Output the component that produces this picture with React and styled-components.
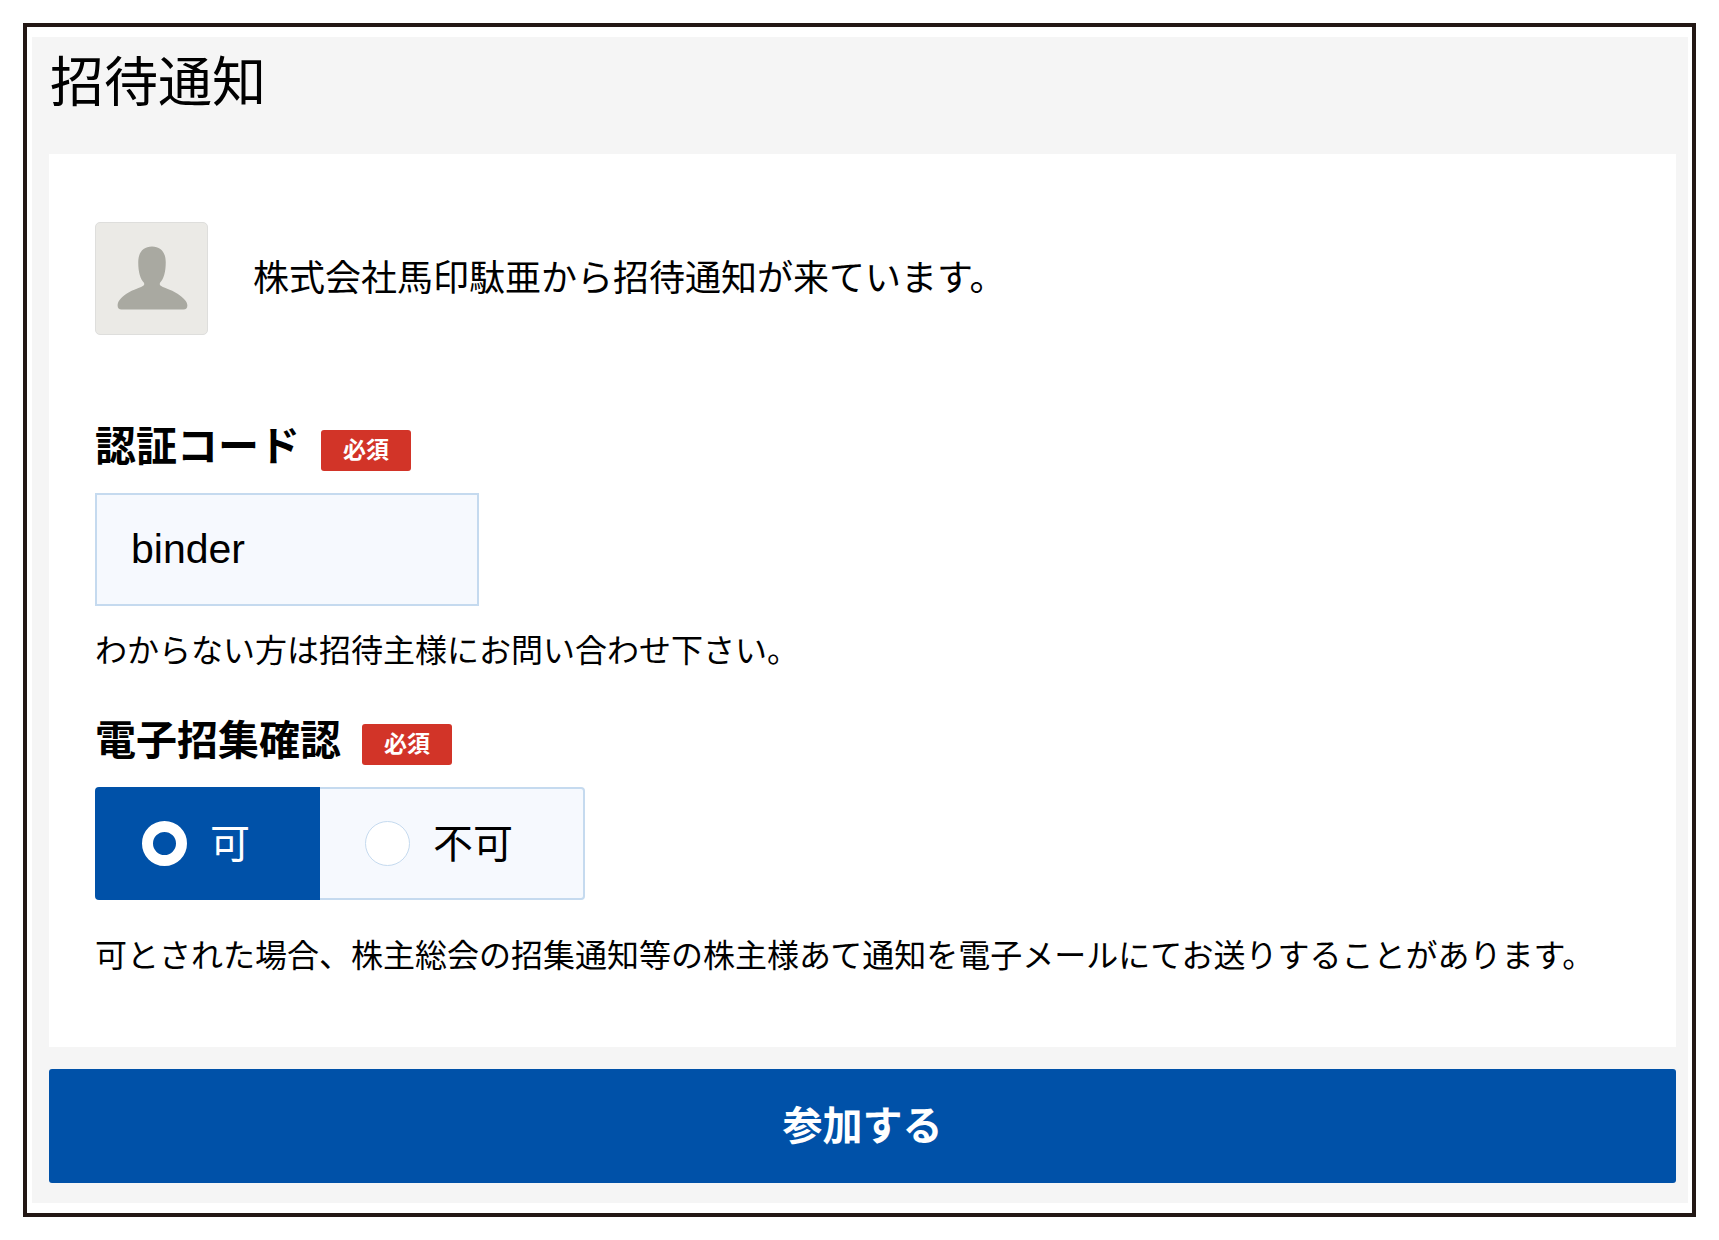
import React, { useState } from 'react';
import styled, { createGlobalStyle } from 'styled-components';

const GlobalStyle = createGlobalStyle`
    :root {
        --blue: #0051a8;
        --pale-blue: #f6f9fe;
        --line-blue: #c5daef;
        --red: #d23428;
        --gray: #f5f5f5;
    }
    * { box-sizing: border-box; }
    body {
        margin: 0;
        background: #fff;
        color: #000;
        font-family: "Liberation Sans", "Noto Sans CJK JP", sans-serif;
    }
`;
const Frame = styled.div`
    margin: 23px;
    padding: 10px 4px 10px 5px;
    border: 4px solid #231815;
`;
const Page = styled.main`
    padding: 0 12px 20px 17px;
    background: var(--gray);
`;
const Title = styled.h1`
    margin: 0;
    padding: 0 1px 25px;
    font-size: 54px;
    font-weight: 400;
    line-height: 92px;
`;
const Card = styled.section`
    padding: 68px 46px 67px;
    background: #fff;
`;
const Sender = styled.div`
    display: flex;
    align-items: center;
    gap: 45px;
    margin-bottom: 88px;
`;
const Avatar = styled.svg`
    flex: none;
    width: 113px;
    height: 113px;
    border: 1px solid #dededc;
    border-radius: 5px;
    background: #ebeae6;
`;
const Message = styled.p`
    margin: 0;
    font-size: 36px;
    line-height: 48px;
`;
const Field = styled.div`
    margin-bottom: 42px;
`;
const RadioField = styled.fieldset`
    min-width: 0;
    margin: 0;
    padding: 0;
    border: 0;
`;
const FieldLabel = styled.label`
    display: flex;
    align-items: flex-end;
    gap: 21px;
    padding: 0;
    margin-bottom: 22px;
    font-size: 41px;
    font-weight: 700;
    line-height: 48px;
`;
const Badge = styled.span`
    padding: 0 22px;
    border-radius: 3px;
    background: var(--red);
    color: #fff;
    font-size: 23px;
    line-height: 41px;
`;
const TextInput = styled.input`
    display: block;
    width: 384px;
    max-width: 100%;
    height: 113px;
    padding: 0 34px;
    border: 2px solid var(--line-blue);
    border-radius: 0;
    background: var(--pale-blue);
    color: #000;
    font-family: inherit;
    font-size: 41px;
`;
const Help = styled.p`
    margin: ${({ $gap }) => $gap}px 0 0;
    font-size: 32px;
    line-height: 48px;
`;
const RadioGroup = styled.div`
    display: inline-flex;
    height: 113px;
    vertical-align: top;
`;
const Option = styled.label`
    display: flex;
    align-items: center;
    gap: 23px;
    padding: 0 70px 0 45px;
    border: 2px solid ${({ $checked }) => ($checked ? 'var(--blue)' : 'var(--line-blue)')};
    background: ${({ $checked }) => ($checked ? 'var(--blue)' : 'var(--pale-blue)')};
    color: ${({ $checked }) => ($checked ? '#fff' : '#000')};
    font-size: 40px;
    line-height: 48px;
    cursor: pointer;

    &:first-child {
        border-right: 0;
        border-radius: 4px 0 0 4px;
    }
    &:last-child {
        border-left: 0;
        border-radius: 0 4px 4px 0;
    }
`;
const Radio = styled.input`
    appearance: none;
    width: 45px;
    height: 45px;
    margin: 0;
    border: 1px solid var(--line-blue);
    border-radius: 50%;
    background: #fff;

    &:checked {
        border: 11px solid #fff;
        background: var(--blue);
    }
`;
const SubmitButton = styled.button`
    display: block;
    width: 100%;
    height: 114px;
    margin-top: 22px;
    border: 0;
    border-radius: 3px;
    background: var(--blue);
    color: #fff;
    font-family: inherit;
    font-size: 40px;
    font-weight: 700;
    line-height: 48px;
    cursor: pointer;
`;

const options = [
    { value: 'yes', text: '可' },
    { value: 'no', text: '不可' },
];

const App = () => {
    const [code, setCode] = useState('binder');
    const [consent, setConsent] = useState('yes');

    return (
        <>
            <GlobalStyle />
            <Frame>
                <Page>
                    <Title>招待通知</Title>
                    <form onSubmit={e => e.preventDefault()}>
                        <Card>
                            <Sender>
                                <Avatar viewBox="0 0 113 113" aria-hidden="true">
                                    <path
                                        fill="#a9a9a1"
                                        d="M57 24C48 24 43 30 43 40C43 50 45 57 49 61V63C46 66 38 67 31 72C25 76 22 80 22 84Q22 88 26 88H89Q93 88 93 84C93 80 89 76 83 72C76 67 68 66 65 63V61C69 57 71 50 71 40C71 30 66 24 57 24Z"
                                    />
                                </Avatar>
                                <Message>株式会社馬印駄亜から招待通知が来ています。</Message>
                            </Sender>

                            <Field>
                                <FieldLabel htmlFor="code">
                                    認証コード
                                    <Badge>必須</Badge>
                                </FieldLabel>
                                <TextInput
                                    id="code"
                                    type="text"
                                    value={code}
                                    onChange={e => setCode(e.target.value)}
                                    required
                                />
                                <Help $gap={21}>わからない方は招待主様にお問い合わせ下さい。</Help>
                            </Field>

                            <RadioField>
                                <FieldLabel as="legend">
                                    電子招集確認
                                    <Badge>必須</Badge>
                                </FieldLabel>
                                <RadioGroup>
                                    {options.map(({ value, text }) => (
                                        <Option key={value} $checked={consent === value}>
                                            <Radio
                                                type="radio"
                                                name="consent"
                                                value={value}
                                                checked={consent === value}
                                                onChange={() => setConsent(value)}
                                            />
                                            {text}
                                        </Option>
                                    ))}
                                </RadioGroup>
                                <Help $gap={32}>
                                    可とされた場合、株主総会の招集通知等の株主様あて通知を電子メールにてお送りすることがあります。
                                </Help>
                            </RadioField>
                        </Card>
                        <SubmitButton type="submit">参加する</SubmitButton>
                    </form>
                </Page>
            </Frame>
        </>
    );
};

export default App;
